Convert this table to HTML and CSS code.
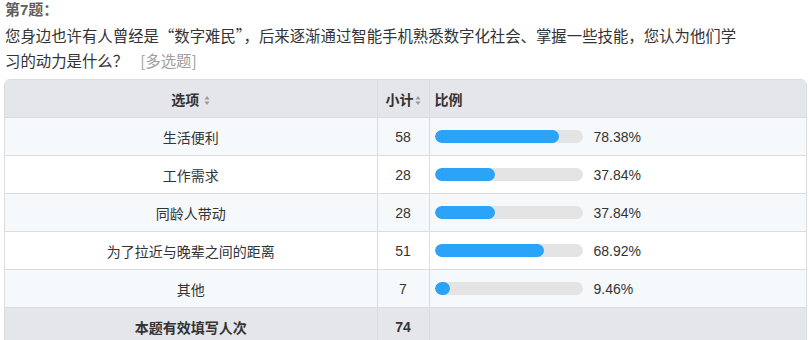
FILE: index.html
```html
<!DOCTYPE html>
<html lang="zh-CN">
<head>
<meta charset="utf-8">
<link rel="stylesheet" href="styles.css">
</head>
<body>
<div class="question">
  <div class="q-title">第7题：</div>
  <div class="q-text">您身边也许有人曾经是“数字难民”，后来逐渐通过智能手机熟悉数字化社会、掌握一些技能，您认为他们学习的动力是什么？<span class="q-type">[多选题]</span></div>
  <div class="table-wrap">
    <table class="result">
      <colgroup><col class="c1"><col class="c2"><col class="c3"></colgroup>
      <thead>
        <tr>
          <th class="center">选项<svg class="sort sort-gap" width="6" height="11" viewBox="0 0 6 11"><path d="M3 1 L5.6 4.6 H0.4 Z M3 10 L5.6 6.4 H0.4 Z" fill="#9a9a9a"/></svg></th>
          <th class="center tight">小计<svg class="sort" width="6" height="11" viewBox="0 0 6 11"><path d="M3 1 L5.6 4.6 H0.4 Z M3 10 L5.6 6.4 H0.4 Z" fill="#9a9a9a"/></svg></th>
          <th class="left">比例</th>
        </tr>
      </thead>
      <tbody>
        <tr class="odd"><td class="center">生活便利</td><td class="center">58</td><td><div class="ratio"><div class="track"><div class="fill" style="width:124px"></div></div><span class="pct">78.38%</span></div></td></tr>
        <tr><td class="center">工作需求</td><td class="center">28</td><td><div class="ratio"><div class="track"><div class="fill" style="width:60px"></div></div><span class="pct">37.84%</span></div></td></tr>
        <tr class="odd"><td class="center">同龄人带动</td><td class="center">28</td><td><div class="ratio"><div class="track"><div class="fill" style="width:60px"></div></div><span class="pct">37.84%</span></div></td></tr>
        <tr><td class="center">为了拉近与晚辈之间的距离</td><td class="center">51</td><td><div class="ratio"><div class="track"><div class="fill" style="width:109px"></div></div><span class="pct">68.92%</span></div></td></tr>
        <tr class="odd"><td class="center">其他</td><td class="center">7</td><td><div class="ratio"><div class="track"><div class="fill" style="width:15px"></div></div><span class="pct">9.46%</span></div></td></tr>
      </tbody>
      <tfoot>
        <tr><td class="center">本题有效填写人次</td><td class="center">74</td><td class="empty"></td></tr>
      </tfoot>
    </table>
  </div>
</div>
</body>
</html>
```

FILE: styles.css
```css
html, body {
  margin: 0;
  padding: 0;
  background: #ffffff;
}
body {
  font-family: "Liberation Sans", "Noto Sans CJK SC", sans-serif;
  color: #333333;
}
.question {
  padding: 0 2px 0 4px;
}
.q-title {
  padding-left: 1px;
  font-size: 15px;
  font-weight: bold;
  color: #5f5f5f;
  line-height: 20px;
}
.q-text {
  padding-left: 1px;
  margin-top: 3px;
  width: 744px;
  font-family: "Noto Sans CJK SC", sans-serif;
  font-size: 15.4px;
  line-height: 25px;
  color: #333333;
}
.q-type {
  color: #a0a0a0;
  margin-left: 12px;
}
.table-wrap {
  margin-top: 6px;
  border: 1px solid #dcdcdc;
  border-radius: 6px 6px 0 0;
  overflow: hidden;
}
.result {
  width: 100%;
  border-collapse: collapse;
  table-layout: fixed;
  font-size: 14px;
}
.c1 { width: 372px; }
.c2 { width: 52px; }
.result th,
.result td {
  height: 37px;
  padding: 0 5px;
  border-right: 1px solid #dcdcdc;
  border-bottom: 1px solid #dcdcdc;
}
.result th.tight {
  padding: 0 2px;
}
.result th:last-child,
.result td:last-child {
  border-right: none;
}
.result thead tr {
  background: #e5e6e9;
}
.result th {
  font-weight: bold;
  color: #333333;
}
.center { text-align: center; }
.left { text-align: left; }
.sort {
  vertical-align: -1px;
  margin-left: 1px;
}
.sort-gap {
  margin-left: 5px;
}
.result tbody tr.odd {
  background: #f6f9fc;
}
.result tfoot tr {
  background: #e5e6e9;
  font-weight: bold;
}
.ratio {
  display: flex;
  align-items: center;
}
.track {
  width: 148px;
  height: 13px;
  border-radius: 7px;
  background: #e4e4e4;
  overflow: hidden;
  flex: none;
}
.fill {
  height: 100%;
  border-radius: 7px;
  background: #2aa3f8;
}
.pct {
  margin-left: 11px;
}
```
